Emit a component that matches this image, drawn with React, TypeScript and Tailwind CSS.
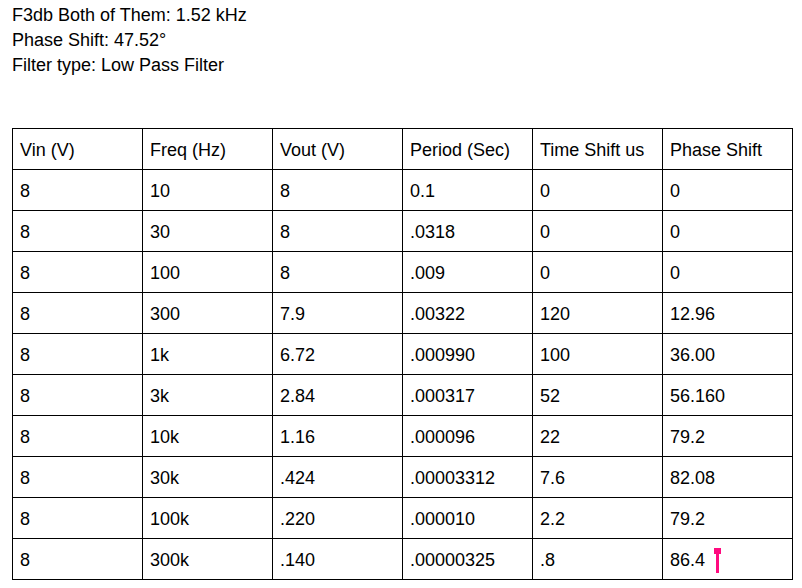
import React from "react";

const header = ["Vin (V)", "Freq (Hz)", "Vout (V)", "Period (Sec)", "Time Shift us", "Phase Shift"];
const rows: string[][] = [
  ["8", "10", "8", "0.1", "0", "0"],
  ["8", "30", "8", ".0318", "0", "0"],
  ["8", "100", "8", ".009", "0", "0"],
  ["8", "300", "7.9", ".00322", "120", "12.96"],
  ["8", "1k", "6.72", ".000990", "100", "36.00"],
  ["8", "3k", "2.84", ".000317", "52", "56.160"],
  ["8", "10k", "1.16", ".000096", "22", "79.2"],
  ["8", "30k", ".424", ".00003312", "7.6", "82.08"],
  ["8", "100k", ".220", ".000010", "2.2", "79.2"],
  ["8", "300k", ".140", ".00000325", ".8", "86.4"],
];

export default function App() {
  return (
    <div
      className="w-[802px] h-[588px] bg-white text-black overflow-hidden"
      style={{ fontFamily: '"Liberation Sans", Arial, sans-serif' }}
    >
      <div className="pl-[12px] pt-[3px] text-[18px] leading-[25px]">
        <div>F3db Both of Them: 1.52 kHz</div>
        <div>Phase Shift: 47.52°</div>
        <div>Filter type: Low Pass Filter</div>
      </div>
      <div className="pl-[12px] pt-[50px]">
        <table className="table-fixed border-collapse w-[781px] text-[18px] leading-[22px]">
          <tbody>
            {[header, ...rows].map((r, i) => (
              <tr key={i} className="h-[41px]">
                {r.map((c, j) => (
                  <td
                    key={j}
                    className="w-[130px] border border-black pl-[7px] pr-[2px] pt-[2px] pb-0 align-middle whitespace-nowrap"
                  >
                    {i === rows.length && j === 5 ? (
                      <span className="inline-flex items-center">
                        {c}
                        <span className="relative ml-[9px] inline-block w-[7px] h-[25px] top-[0px]">
                          <span className="absolute left-0 top-0 w-[7px] h-[6px] bg-[#ff0a7f]" />
                          <span className="absolute left-[2px] top-0 w-[3px] h-[25px] bg-[#ff0a7f]" />
                        </span>
                      </span>
                    ) : (
                      c
                    )}
                  </td>
                ))}
              </tr>
            ))}
          </tbody>
        </table>
      </div>
    </div>
  );
}
